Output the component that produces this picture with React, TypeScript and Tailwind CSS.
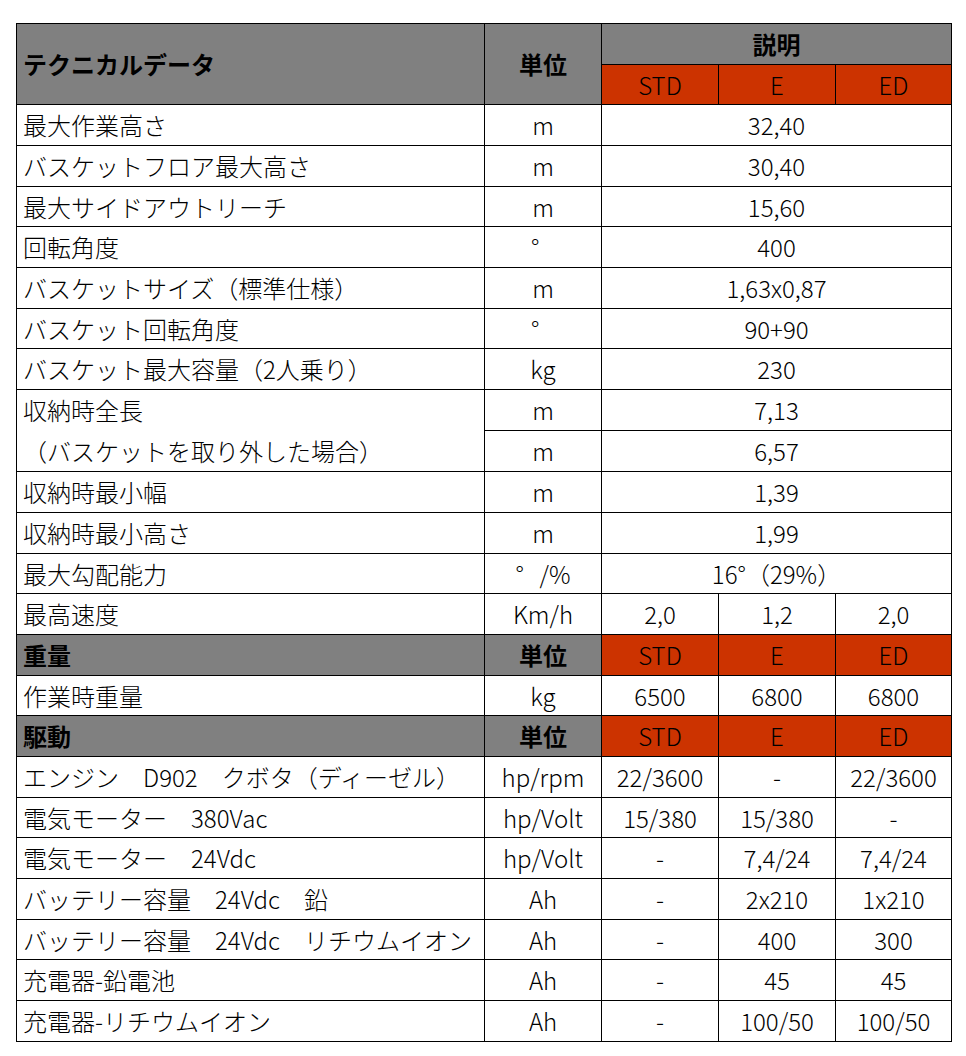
import React from 'react'

type Cell = React.ReactNode

interface SpecRow {
  label: Cell
  unit: Cell
  values: Cell[]
}

const Deg = () => <span className="inline-block w-[1em] text-left">°</span>

const topRows: SpecRow[] = [
  { label: '最大作業高さ', unit: 'm', values: ['32,40'] },
  { label: 'バスケットフロア最大高さ', unit: 'm', values: ['30,40'] },
  { label: '最大サイドアウトリーチ', unit: 'm', values: ['15,60'] },
  { label: '回転角度', unit: <Deg />, values: ['400'] },
  { label: 'バスケットサイズ（標準仕様）', unit: 'm', values: ['1,63x0,87'] },
  { label: 'バスケット回転角度', unit: <Deg />, values: ['90+90'] },
  { label: 'バスケット最大容量（2人乗り）', unit: 'kg', values: ['230'] },
]

const midRows: SpecRow[] = [
  { label: '収納時最小幅', unit: 'm', values: ['1,39'] },
  { label: '収納時最小高さ', unit: 'm', values: ['1,99'] },
  { label: '最大勾配能力', unit: <><Deg />/%</>, values: ['16°（29%）'] },
  { label: '最高速度', unit: 'Km/h', values: ['2,0', '1,2', '2,0'] },
]

const driveRows: SpecRow[] = [
  { label: 'エンジン　D902　クボタ（ディーゼル）', unit: 'hp/rpm', values: ['22/3600', '-', '22/3600'] },
  { label: '電気モーター　380Vac', unit: 'hp/Volt', values: ['15/380', '15/380', '-'] },
  { label: '電気モーター　24Vdc', unit: 'hp/Volt', values: ['-', '7,4/24', '7,4/24'] },
  { label: 'バッテリー容量　24Vdc　鉛', unit: 'Ah', values: ['-', '2x210', '1x210'] },
  { label: 'バッテリー容量　24Vdc　リチウムイオン', unit: 'Ah', values: ['-', '400', '300'] },
  { label: '充電器-鉛電池', unit: 'Ah', values: ['-', '45', '45'] },
  { label: '充電器-リチウムイオン', unit: 'Ah', values: ['-', '100/50', '100/50'] },
]

const td = 'border border-black p-0 align-middle'
const gray = 'bg-[#808080]'
const orange = 'bg-[#cc3300]'

function DataRow({ row }: { row: SpecRow }) {
  return (
    <tr className="h-[40.68px]">
      <td className={`${td} pl-[6px] text-left whitespace-nowrap`}>{row.label}</td>
      <td className={`${td} text-center`}>{row.unit}</td>
      {row.values.length === 1 ? (
        <td colSpan={3} className={`${td} text-center`}>{row.values[0]}</td>
      ) : (
        row.values.map((v, i) => (
          <td key={i} className={`${td} text-center`}>{v}</td>
        ))
      )}
    </tr>
  )
}

function SectionRow({ title }: { title: string }) {
  return (
    <tr className="h-[40.68px]">
      <td className={`${td} ${gray} pl-[6px] text-left font-bold`}>{title}</td>
      <td className={`${td} ${gray} text-center font-bold`}>単位</td>
      <td className={`${td} ${orange} text-center`}>STD</td>
      <td className={`${td} ${orange} text-center`}>E</td>
      <td className={`${td} ${orange} text-center`}>ED</td>
    </tr>
  )
}

export default function App() {
  return (
    <div className="min-h-[1056px] w-[966px] bg-white pt-[23px] pl-[16px] text-black">
      <table
        className="table-fixed border-collapse text-[24px] font-light leading-none w-[935px]"
        style={{ fontFamily: '"Noto Sans CJK JP", "Noto Sans", sans-serif' }}
      >
        <colgroup>
          <col className="w-[468px]" />
          <col className="w-[117px]" />
          <col className="w-[117px]" />
          <col className="w-[117px]" />
          <col className="w-[116px]" />
        </colgroup>
        <tbody>
          {/* header */}
          <tr className="h-[40.68px]">
            <td rowSpan={2} className={`${td} ${gray} pl-[6px] text-left font-bold`}>
              テクニカルデータ
            </td>
            <td rowSpan={2} className={`${td} ${gray} text-center font-bold`}>単位</td>
            <td colSpan={3} className={`${td} ${gray} text-center font-bold`}>説明</td>
          </tr>
          <tr className="h-[40.68px]">
            <td className={`${td} ${orange} text-center`}>STD</td>
            <td className={`${td} ${orange} text-center`}>E</td>
            <td className={`${td} ${orange} text-center`}>ED</td>
          </tr>

          {topRows.map((r, i) => (
            <DataRow key={i} row={r} />
          ))}

          {/* stowed length, with and without basket */}
          <tr className="h-[40.68px]">
            <td rowSpan={2} className={`${td} pl-[6px] text-left whitespace-nowrap`}>
              <div className="flex h-[40.68px] items-center">収納時全長</div>
              <div className="flex h-[40.68px] items-center">（バスケットを取り外した場合）</div>
            </td>
            <td className={`${td} text-center`}>m</td>
            <td colSpan={3} className={`${td} text-center`}>7,13</td>
          </tr>
          <tr className="h-[40.68px]">
            <td className={`${td} text-center`}>m</td>
            <td colSpan={3} className={`${td} text-center`}>6,57</td>
          </tr>

          {midRows.map((r, i) => (
            <DataRow key={i} row={r} />
          ))}

          <SectionRow title="重量" />
          <DataRow row={{ label: '作業時重量', unit: 'kg', values: ['6500', '6800', '6800'] }} />

          <SectionRow title="駆動" />
          {driveRows.map((r, i) => (
            <DataRow key={i} row={r} />
          ))}
        </tbody>
      </table>
    </div>
  )
}
